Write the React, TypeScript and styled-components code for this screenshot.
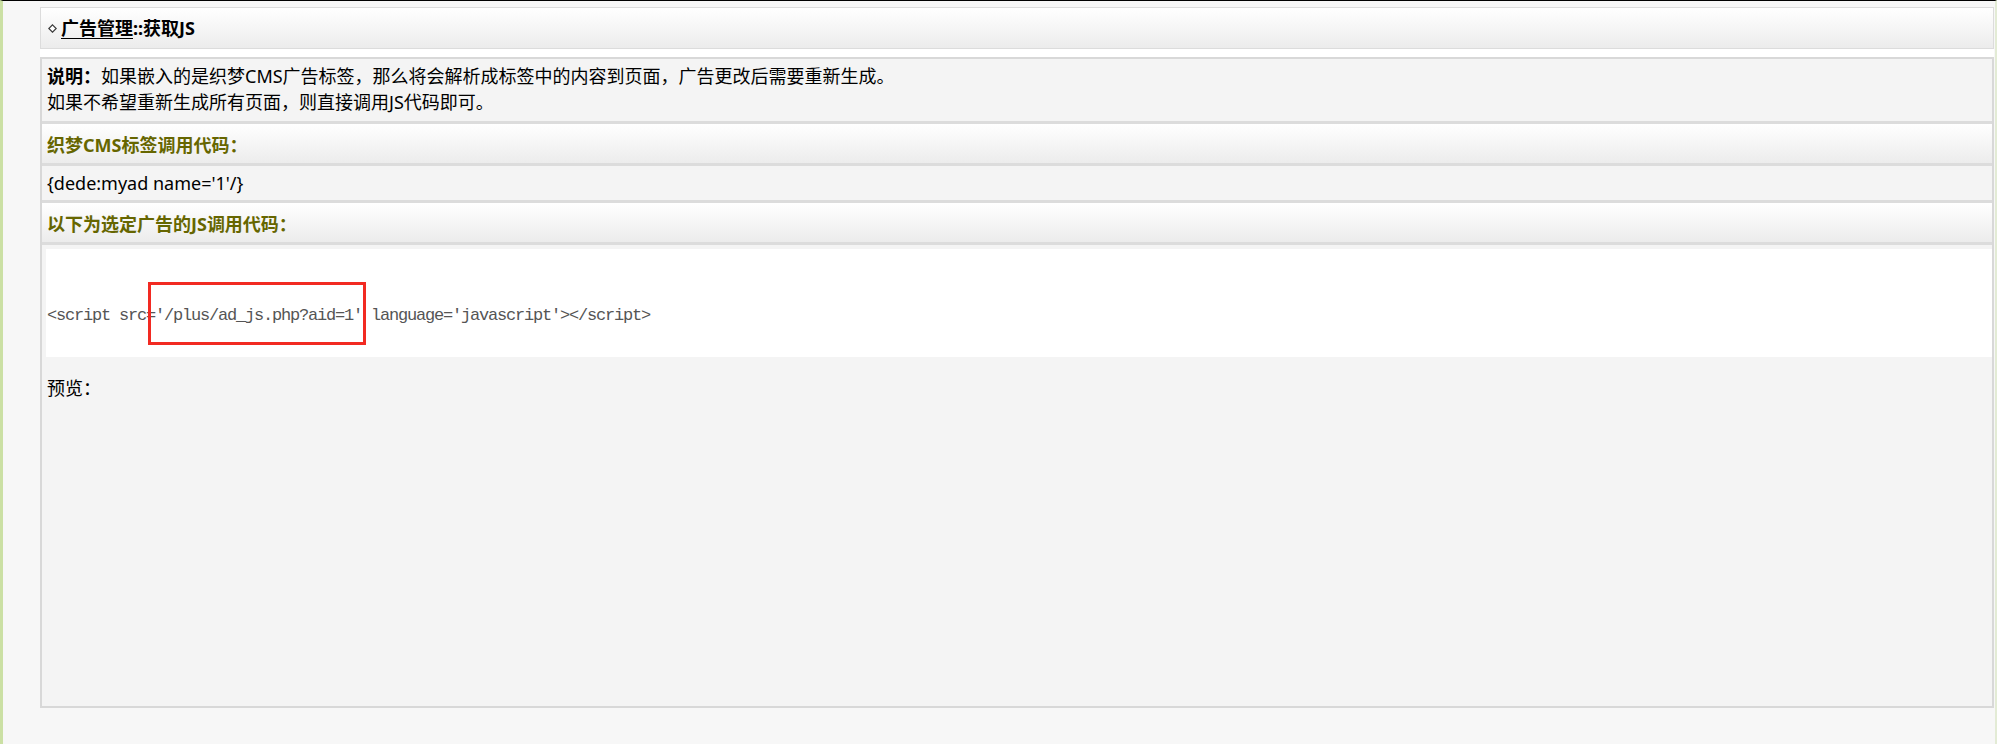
import React from "react";
import styled, { createGlobalStyle } from "styled-components";

const GlobalStyle = createGlobalStyle`
  html, body { margin: 0; padding: 0; }
  body {
    background: #f7f7f7;
    font-family: "Noto Sans", "Noto Sans CJK SC", sans-serif;
    font-size: 18px;
    color: #000;
  }
`;

const Page = styled.div`
  box-sizing: border-box;
  height: 744px;
  border-top: 1px solid #000;
  border-left: 3px solid #cbe0a4;
  border-right: 2px solid #e3ebd5;
  padding: 6px 1px 0 37px;
  background: #f7f7f7;
`;

const TitleBar = styled.div`
  box-sizing: border-box;
  height: 42px;
  border: 1px solid #dcdcdc;
  background: linear-gradient(#ffffff, #ececec);
  display: flex;
  align-items: center;
  gap: 3px;
  padding-left: 7px;
  font-weight: 700;
  font-size: 18px;
  line-height: 1;
`;

const TitleLink = styled.a`
  color: #000;
  text-decoration: underline;
  text-underline-offset: 3px;
  text-decoration-thickness: 1px;
`;

const Gap = styled.div`
  height: 8px;
  background: #ffffff;
`;

const MainBox = styled.div`
  box-sizing: border-box;
  height: 651px;
  border: 2px solid #d8d8d8;
  background: #dcdcdc;
  display: flex;
  flex-direction: column;
  gap: 3px;
`;

const NoteRow = styled.div`
  background: #f4f4f4;
  padding: 4px 5px 6px;
  line-height: 26px;
`;

const SectionHead = styled.div`
  box-sizing: border-box;
  height: 39px;
  display: flex;
  align-items: center;
  padding-left: 5px;
  background: linear-gradient(#ffffff, #ececec);
  color: #666600;
  font-weight: 700;
`;

const PlainRow = styled.div<{ $h: number }>`
  box-sizing: border-box;
  height: ${(p) => p.$h}px;
  display: flex;
  align-items: center;
  padding-left: 5px;
  background: #f4f4f4;
`;

const PreviewRow = styled.div`
  flex: 1;
  background: #f4f4f4;
  padding: 4px 0 0 4px;
`;

const CodeBlock = styled.div`
  position: relative;
  box-sizing: border-box;
  height: 108px;
  background: #ffffff;
  padding: 55px 0 0 1px;
  font-family: "Liberation Mono", monospace;
  font-size: 17px;
  letter-spacing: -1.2px;
  line-height: 24px;
  color: #555;
  white-space: pre;
`;

const Highlight = styled.span`
  position: absolute;
  left: 102px;
  top: 33px;
  width: 218px;
  height: 63px;
  box-sizing: border-box;
  border: 3px solid #f22a22;
  pointer-events: none;
`;

const PreviewLabel = styled.div`
  margin-top: 18px;
  padding-left: 1px;
  line-height: 26px;
`;

const Diamond = () => (
  <svg width="9" height="9" viewBox="0 0 9 9" style={{ marginRight: 1 }}>
    <path d="M4.5 0.8 L8.2 4.5 L4.5 8.2 L0.8 4.5 Z" fill="#fff" stroke="#3a3a3a" strokeWidth="1.2" />
  </svg>
);

export default function App() {
  return (
    <>
      <GlobalStyle />
      <Page>
        <TitleBar>
          <Diamond />
          <span>
            <TitleLink>广告管理</TitleLink>::获取JS
          </span>
        </TitleBar>
        <Gap />
        <MainBox>
          <NoteRow>
            <b>说明：</b>如果嵌入的是织梦CMS广告标签，那么将会解析成标签中的内容到页面，广告更改后需要重新生成。
            <br />
            如果不希望重新生成所有页面，则直接调用JS代码即可。
          </NoteRow>
          <SectionHead>织梦CMS标签调用代码：</SectionHead>
          <PlainRow $h={34}>{"{dede:myad name='1'/}"}</PlainRow>
          <SectionHead>以下为选定广告的JS调用代码：</SectionHead>
          <PreviewRow>
            <CodeBlock>
              {"<script src='/plus/ad_js.php?aid=1' language='javascript'></script>"}
              <Highlight />
            </CodeBlock>
            <PreviewLabel>预览：</PreviewLabel>
          </PreviewRow>
        </MainBox>
      </Page>
    </>
  );
}
